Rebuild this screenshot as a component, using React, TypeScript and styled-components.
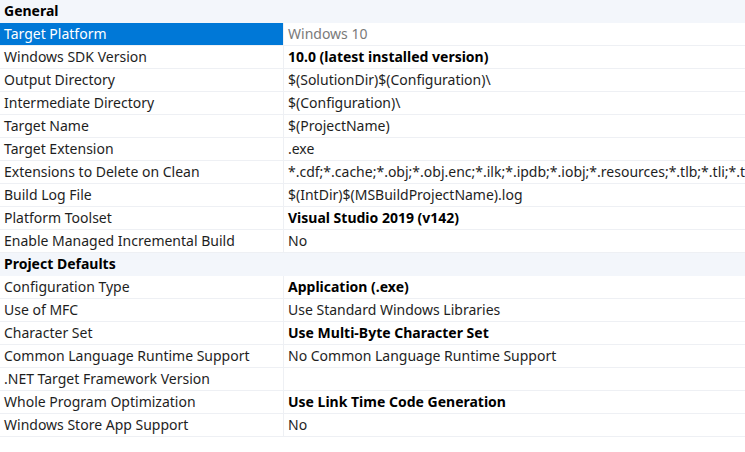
import React from "react";
import styled, { createGlobalStyle } from "styled-components";

interface Row {
  name: string;
  value: string;
  bold?: boolean;
  selected?: boolean;
}

interface Section {
  title: string;
  rows: Row[];
}

const sections: Section[] = [
  {
    title: "General",
    rows: [
      { name: "Target Platform", value: "Windows 10", selected: true },
      { name: "Windows SDK Version", value: "10.0 (latest installed version)", bold: true },
      { name: "Output Directory", value: "$(SolutionDir)$(Configuration)\\" },
      { name: "Intermediate Directory", value: "$(Configuration)\\" },
      { name: "Target Name", value: "$(ProjectName)" },
      { name: "Target Extension", value: ".exe" },
      {
        name: "Extensions to Delete on Clean",
        value:
          "*.cdf;*.cache;*.obj;*.obj.enc;*.ilk;*.ipdb;*.iobj;*.resources;*.tlb;*.tli;*.tlh;*.tmp;*.rsp;*.pgc;*.pgd;*.meta;*.tlog;*.manifest;*.res;*.pch;*.exp;*.idb;*.rep;*.xdc;*.pdb;*_manifest.rc;*.bsc;*.sbr;*.xml;*.metagen;*.bi"
      },
      { name: "Build Log File", value: "$(IntDir)$(MSBuildProjectName).log" },
      { name: "Platform Toolset", value: "Visual Studio 2019 (v142)", bold: true },
      { name: "Enable Managed Incremental Build", value: "No" }
    ]
  },
  {
    title: "Project Defaults",
    rows: [
      { name: "Configuration Type", value: "Application (.exe)", bold: true },
      { name: "Use of MFC", value: "Use Standard Windows Libraries" },
      { name: "Character Set", value: "Use Multi-Byte Character Set", bold: true },
      { name: "Common Language Runtime Support", value: "No Common Language Runtime Support" },
      { name: ".NET Target Framework Version", value: "" },
      { name: "Whole Program Optimization", value: "Use Link Time Code Generation", bold: true },
      { name: "Windows Store App Support", value: "No" }
    ]
  }
];

const GlobalStyle = createGlobalStyle`
  html, body {
    margin: 0;
    padding: 0;
    background: #ffffff;
    overflow: hidden;
  }
  body {
    font-family: "Noto Sans", "Open Sans", sans-serif;
    font-size: 14px;
    color: #1e1e1e;
  }
`;

const Grid = styled.div`
  width: 745px;
  height: 452px;
  background: #ffffff;
  overflow: hidden;
`;

const SectionHeader = styled.div`
  height: 22px;
  line-height: 22px;
  padding-left: 4px;
  background: #f3f6fb;
  font-weight: bold;
  color: #000000;
  border-bottom: 1px solid #f3f6fb;
`;

const PropRow = styled.div`
  display: grid;
  grid-template-columns: 283px 1fr;
  height: 22px;
  border-bottom: 1px solid #eef0f4;
`;

const NameCell = styled.div<{ $selected?: boolean }>`
  padding-left: 4px;
  line-height: 22px;
  white-space: nowrap;
  overflow: hidden;
  background: ${(p) => (p.$selected ? "#0078d7" : "transparent")};
  color: ${(p) => (p.$selected ? "#ffffff" : "#1e1e1e")};
`;

const ValueCell = styled.div<{ $bold?: boolean; $muted?: boolean }>`
  padding-left: 4px;
  line-height: 22px;
  white-space: nowrap;
  overflow: hidden;
  border-left: 1px solid #eef0f4;
  font-weight: ${(p) => (p.$bold ? "bold" : "normal")};
  color: ${(p) => (p.$muted ? "#7a7a7a" : p.$bold ? "#000000" : "#1e1e1e")};
`;

const App = () => (
  <>
    <GlobalStyle />
    <Grid>
      {sections.map((section) => (
        <React.Fragment key={section.title}>
          <SectionHeader>{section.title}</SectionHeader>
          {section.rows.map((row) => (
            <PropRow key={row.name}>
              <NameCell $selected={row.selected}>{row.name}</NameCell>
              <ValueCell $bold={row.bold} $muted={row.selected}>
                {row.value}
              </ValueCell>
            </PropRow>
          ))}
        </React.Fragment>
      ))}
    </Grid>
  </>
);

export default App;
